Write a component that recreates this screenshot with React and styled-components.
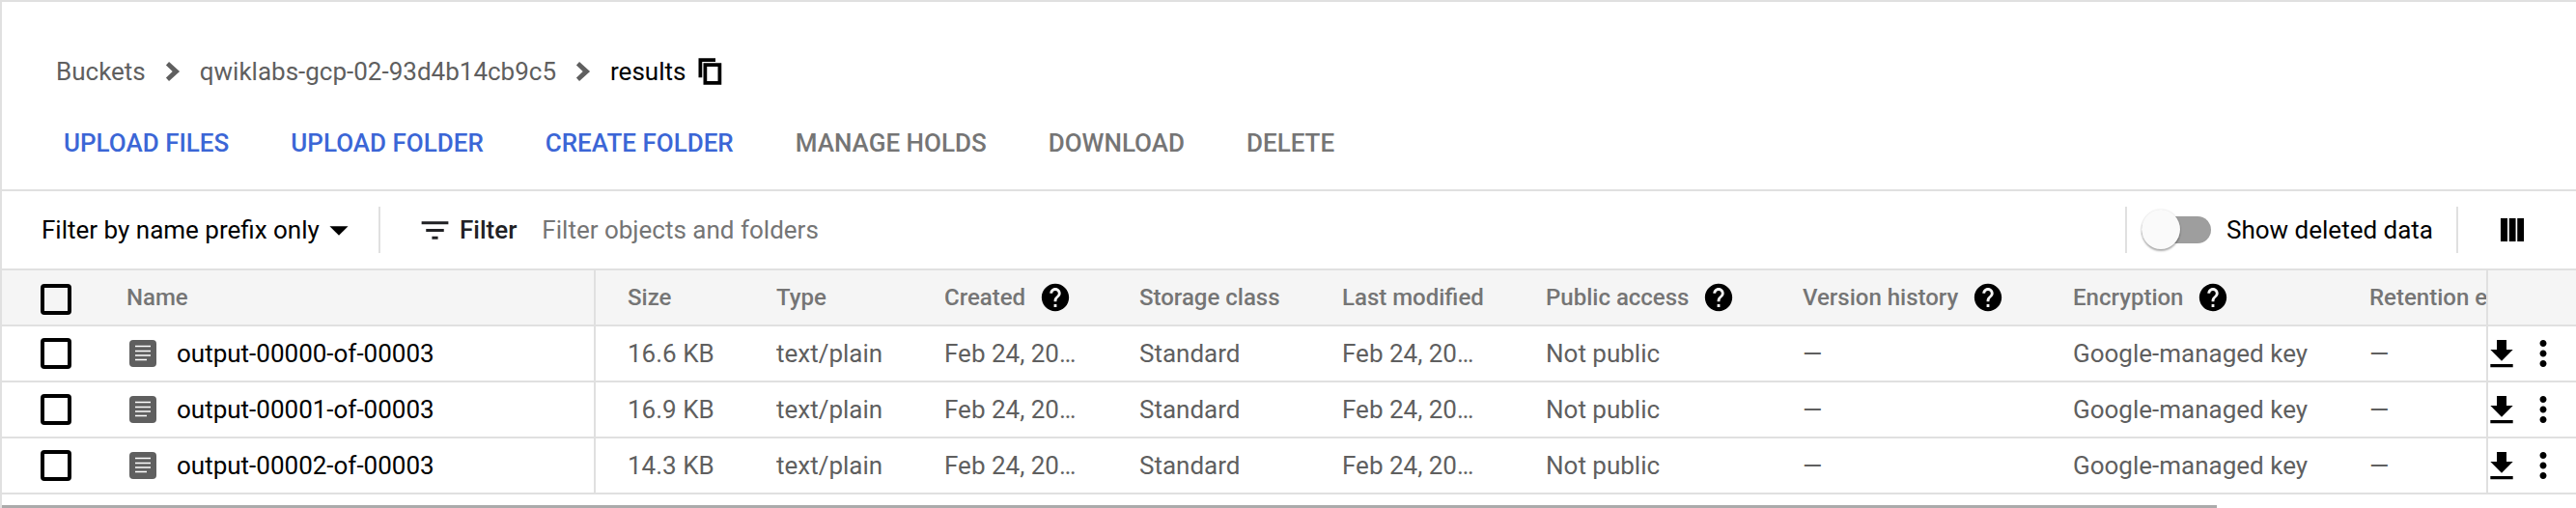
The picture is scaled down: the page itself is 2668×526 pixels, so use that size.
import React from 'react'
import styled, { createGlobalStyle } from 'styled-components'

const GlobalStyle = createGlobalStyle`
    html, body {
        margin: 0;
        padding: 0;
        background: #fff;
    }
    body {
        font-family: Roboto, "Liberation Sans", sans-serif;
        color: #202124;
    }
`

const columns = [
    { label: 'Size', key: 'size' },
    { label: 'Type', key: 'type' },
    { label: 'Created', key: 'created', help: true },
    { label: 'Storage class', key: 'storage' },
    { label: 'Last modified', key: 'modified' },
    { label: 'Public access', key: 'access', help: true },
    { label: 'Version history', key: 'version', help: true },
    { label: 'Encryption', key: 'encryption', help: true },
    { label: 'Retention expiration date', key: 'retention' },
]

const files = [
    { name: 'output-00000-of-00003', size: '16.6 KB' },
    { name: 'output-00001-of-00003', size: '16.9 KB' },
    { name: 'output-00002-of-00003', size: '14.3 KB' },
].map((file) => ({
    ...file,
    type: 'text/plain',
    created: 'Feb 24, 20…',
    storage: 'Standard',
    modified: 'Feb 24, 20…',
    access: 'Not public',
    version: '—',
    encryption: 'Google-managed key',
    retention: '—',
}))

const Icon = ({ d, size = 34, color = '#000' }) => (
    <svg width={size} height={size} viewBox="0 0 24 24" fill={color} style={{ flex: 'none', display: 'block' }}>
        <path d={d} />
    </svg>
)

const DocGlyph = () => (
    <svg width="28" height="28" viewBox="0 0 28 28" style={{ flex: 'none', display: 'block' }}>
        <rect width="28" height="28" rx="4" fill="#5f5f5f" />
        <path d="M6 6.5h16M6 11.5h16M6 16h16M6 20.5h12" stroke="#fff" strokeWidth="1.6" />
    </svg>
)

const paths = {
    chevron: 'M9.2 4.9L17 12l-7.8 7.1L7 16.6l4.8-4.6L7 7.4z',
    copy: 'M16 1H2v16h3V4h11V1zM6 5h15v18H6zM9 8v12h9V8z',
    caret: 'M7 10l5 5 5-5z',
    filter: 'M10 18h4v-2h-4v2zM3 6v2h18V6H3zm3 7h12v-2H6v2z',
    help: 'M12 2C6.48 2 2 6.48 2 12s4.48 10 10 10 10-4.48 10-10S17.52 2 12 2zm1 17h-2v-2h2v2zm2.07-7.75l-.9.92C13.45 12.9 13 13.5 13 15h-2v-.5c0-1.1.45-2.1 1.17-2.83l1.24-1.26c.37-.36.59-.86.59-1.41 0-1.1-.9-2-2-2s-2 .9-2 2H8c0-2.21 1.79-4 4-4s4 1.79 4 4c0 .88-.36 1.68-.93 2.25z',
    download: 'M19 9h-4V3H9v6H5l7 7 7-7zM5 18v2h14v-2H5z',
    more: 'M12 8c1.1 0 2-.9 2-2s-.9-2-2-2-2 .9-2 2 .9 2 2 2zm0 2c-1.1 0-2 .9-2 2s.9 2 2 2 2-.9 2-2-.9-2-2-2zm0 6c-1.1 0-2 .9-2 2s.9 2 2 2 2-.9 2-2-.9-2-2-2z',
    columns: 'M3.5 3.5h5v17h-5zM9.7 3.5h4.8v17H9.7zM15.7 3.5h4.8v17h-4.8z',
}

export default function App() {
    return (
        <Page>
            <GlobalStyle />
            <Breadcrumbs>
                <Crumb>Buckets</Crumb>
                <Icon d={paths.chevron} color="#5f5f5f" />
                <Crumb>qwiklabs-gcp-02-93d4b14cb9c5</Crumb>
                <Icon d={paths.chevron} color="#5f5f5f" />
                <Crumb $current>results</Crumb>
                <Icon d={paths.copy} size={30} />
            </Breadcrumbs>
            <Actions>
                <Action $active>Upload files</Action>
                <Action $active>Upload folder</Action>
                <Action $active>Create folder</Action>
                <Action>Manage holds</Action>
                <Action>Download</Action>
                <Action>Delete</Action>
            </Actions>
            <FilterBar>
                <PrefixSelect>
                    Filter by name prefix only
                    <CaretIcon><Icon d={paths.caret} size={46} /></CaretIcon>
                </PrefixSelect>
                <FilterLabel>
                    <Icon d={paths.filter} size={37} color="#202124" />
                    Filter
                </FilterLabel>
                <FilterInput>Filter objects and folders</FilterInput>
                <DeletedToggle>
                    <Switch><Knob /></Switch>
                    Show deleted data
                </DeletedToggle>
                <ColumnsButton><Icon d={paths.columns} /></ColumnsButton>
            </FilterBar>
            <Table>
                <Row $head>
                    <CheckCell $head><Checkbox /></CheckCell>
                    <NameCell>Name</NameCell>
                    {columns.map((col) => (
                        <Cell key={col.key}>
                            <CellText>{col.label}</CellText>
                            {col.help && <HelpIcon><Icon d={paths.help} /></HelpIcon>}
                        </Cell>
                    ))}
                    <ActionCell />
                </Row>
                {files.map((file) => (
                    <Row key={file.name}>
                        <CheckCell><Checkbox /></CheckCell>
                        <NameCell>
                            <DocIcon><DocGlyph /></DocIcon>
                            <FileName>{file.name}</FileName>
                        </NameCell>
                        {columns.map((col) => (
                            <Cell key={col.key}>
                                <CellText>{file[col.key]}</CellText>
                            </Cell>
                        ))}
                        <ActionCell>
                            <DownloadIcon><Icon d={paths.download} size={40} /></DownloadIcon>
                            <MoreIcon><Icon d={paths.more} size={42} /></MoreIcon>
                        </ActionCell>
                    </Row>
                ))}
            </Table>
            <ScrollBar />
        </Page>
    )
}

const Page = styled.div`
    width: 2668px;
    height: 526px;
    box-sizing: border-box;
    border-top: 2px solid #e0e0e0;
    border-left: 2px solid #e0e0e0;
    overflow: hidden;
    font-size: 26px;
`

const Breadcrumbs = styled.div`
    display: flex;
    align-items: center;
    gap: 11px;
    height: 40px;
    margin-top: 52px;
    padding-left: 56px;
`

const Crumb = styled.span`
    color: ${(props) => (props.$current ? '#000' : '#5f5f5f')};
`

const Actions = styled.div`
    display: flex;
    align-items: center;
    gap: 64px;
    box-sizing: border-box;
    height: 104px;
    padding: 6px 0 0 64px;
    border-bottom: 2px solid #e0e0e0;
`

const Action = styled.span`
    font-weight: 500;
    text-transform: uppercase;
    color: ${(props) => (props.$active ? '#3b66d6' : '#757575')};
`

const FilterBar = styled.div`
    display: flex;
    align-items: center;
    height: 80px;
    padding-right: 49px;
`

const PrefixSelect = styled.div`
    display: flex;
    align-items: center;
    width: 349px;
    height: 48px;
    margin-left: 41px;
    color: #000;
    border-right: 2px solid #e0e0e0;
`

const CaretIcon = styled.span`
    display: flex;
    margin-left: -3px;
`

const FilterLabel = styled.div`
    display: flex;
    align-items: center;
    gap: 7px;
    margin-left: 38px;
    font-weight: 500;
    color: #202124;
`

const FilterInput = styled.div`
    flex: 1;
    margin-left: 26px;
    color: #757575;
`

const DeletedToggle = styled.div`
    display: flex;
    align-items: center;
    gap: 16px;
    flex: none;
    width: 345px;
    height: 48px;
    box-sizing: border-box;
    padding-left: 15px;
    color: #000;
    border-left: 2px solid #e0e0e0;
    border-right: 2px solid #e0e0e0;
`

const Switch = styled.div`
    position: relative;
    width: 72px;
    height: 28px;
    border-radius: 14px;
    background: #9e9e9e;
    flex: none;
`

const Knob = styled.div`
    position: absolute;
    left: 0;
    top: -7px;
    width: 40px;
    height: 41px;
    border-radius: 50%;
    background: #fafafa;
    box-shadow: 0 2px 2px rgba(0, 0, 0, 0.3), 0 0 2px rgba(0, 0, 0, 0.15);
`

const ColumnsButton = styled.div`
    display: flex;
    flex: none;
    margin-left: 39px;
`

const Table = styled.div`
    border-top: 2px solid #e0e0e0;
`

const Row = styled.div`
    display: grid;
    grid-template-columns: 129px 486px 187px 174px 202px 210px 211px 266px 280px 307px 121px 93px;
    height: 58px;
    box-sizing: border-box;
    border-bottom: 2px solid #e0e0e0;
    background: ${(props) => (props.$head ? '#f5f5f5' : '#fff')};
    font-size: ${(props) => (props.$head ? '24px' : '26px')};
    font-weight: ${(props) => (props.$head ? 500 : 400)};
    color: ${(props) => (props.$head ? '#757575' : '#5f5f5f')};
`

const CheckCell = styled.div`
    display: flex;
    align-items: center;
    padding-left: 40px;
    padding-top: ${(props) => (props.$head ? '4px' : '0')};
`

const Checkbox = styled.div`
    width: 32px;
    height: 32px;
    box-sizing: border-box;
    border: 4px solid #000;
    border-radius: 4px;
`

const NameCell = styled.div`
    display: flex;
    align-items: center;
    border-right: 2px solid #e0e0e0;
`

const DocIcon = styled.span`
    display: flex;
    margin: 0 21px 0 3px;
`

const FileName = styled.span`
    color: #000;
`

const Cell = styled.div`
    display: flex;
    align-items: center;
    gap: 14px;
    min-width: 0;
    overflow: hidden;
    &:nth-child(3) {
        padding-left: 33px;
    }
`

const CellText = styled.span`
    white-space: nowrap;
`

const HelpIcon = styled.span`
    display: flex;
`

const ActionCell = styled.div`
    display: flex;
    align-items: center;
    border-left: 2px solid #e0e0e0;
`

const DownloadIcon = styled.span`
    display: flex;
    margin: 2px 0 0 -6px;
`

const MoreIcon = styled.span`
    display: flex;
    margin-left: 2px;
`

const ScrollBar = styled.div`
    width: 2294px;
    height: 3px;
    margin-top: 11px;
    background: #ababab;
`
